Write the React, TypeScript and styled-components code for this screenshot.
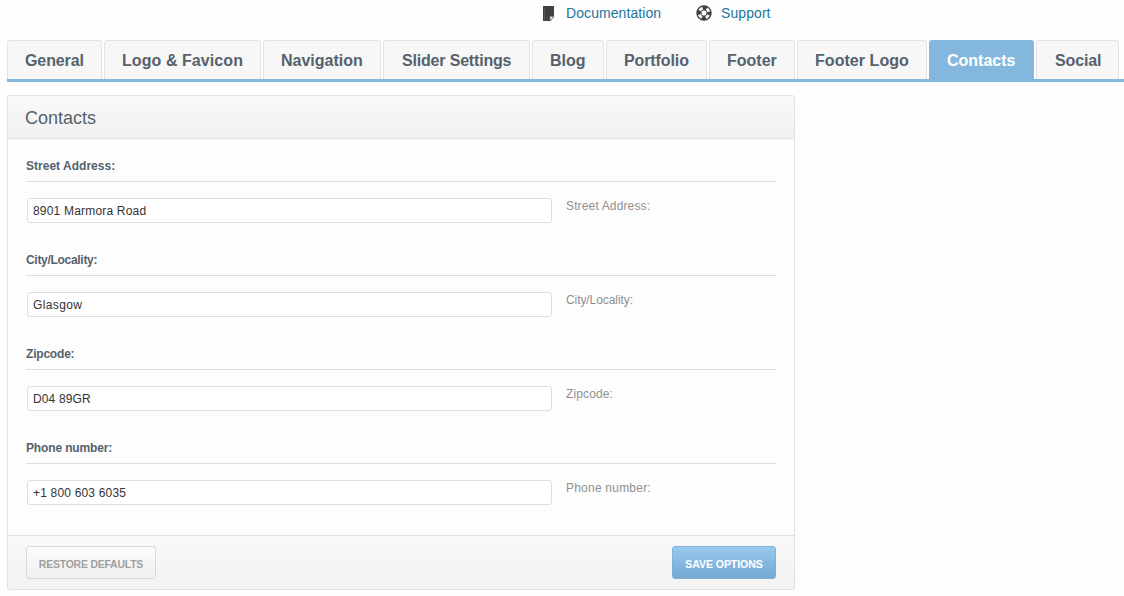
import React from 'react';
import styled, { createGlobalStyle } from 'styled-components';

const GlobalStyle = createGlobalStyle`
  * { box-sizing: border-box; }
  body {
    margin: 0;
    background: #fefefe;
    font-family: "Liberation Sans", Arial, sans-serif;
    overflow: hidden;
  }
`;

const Page = styled.div`
  width: 1124px;
  height: 596px;
  padding-left: 7px;
`;

const HelpLinks = styled.nav`
  display: flex;
  height: 40px;
  padding: 5px 0 0 535px;
  align-items: flex-start;
`;

const HelpLink = styled.a<{ $gap: number; $width: number }>`
  display: flex;
  width: ${(p) => p.$width}px;
  height: 16px;
  align-items: center;
  gap: ${(p) => p.$gap}px;
  color: #21759b;
  font-size: 14px;
  line-height: 16px;
  letter-spacing: 0.08px;
  text-decoration: none;

  svg { flex: none; display: block; }
`;

const TabBar = styled.ul`
  display: flex;
  gap: 2px;
  height: 42px;
  margin: 0;
  padding: 0;
  list-style: none;
  border-bottom: 3px solid #84b7dd;
`;

const Tab = styled.li<{ $width: number; $active?: boolean; $spacing?: number; $indent?: number }>`
  flex: none;
  width: ${(p) => p.$width}px;
  height: 39px;
  padding-left: ${(p) => p.$indent ?? 17}px;
  border: 1px solid ${(p) => (p.$active ? '#84b7dd' : '#e3e3e3')};
  border-bottom: 0;
  border-radius: 3px 3px 0 0;
  background: ${(p) => (p.$active ? '#84b7dd' : '#f7f7f7')};
  color: ${(p) => (p.$active ? '#fff' : '#55626d')};
  font-size: 16px;
  font-weight: bold;
  line-height: 39px;
  letter-spacing: ${(p) => p.$spacing ?? 0}px;
  white-space: nowrap;
`;

const Panel = styled.section`
  width: 788px;
  height: 495px;
  margin-top: 13px;
  border: 1px solid #e1e1e1;
  border-radius: 3px;
  background: #fdfdfd;
  overflow: hidden;
`;

const PanelHeader = styled.h2`
  height: 43px;
  margin: 0;
  padding-left: 17px;
  border-bottom: 1px solid #e1e1e1;
  background: linear-gradient(#f9f9f9, #f1f1f1);
  color: #55626d;
  font-size: 18px;
  font-weight: normal;
  line-height: 44px;
`;

const Fields = styled.div`
  height: 396px;
  padding: 0 18px;
`;

const Field = styled.div`
  height: 94px;
`;

const FieldLabel = styled.label<{ $spacing: number }>`
  display: block;
  height: 43px;
  padding-top: 20px;
  border-bottom: 1px solid #dedede;
  color: #55626d;
  font-size: 12px;
  font-weight: bold;
  line-height: 14px;
  letter-spacing: ${(p) => p.$spacing}px;
`;

const FieldRow = styled.div`
  display: flex;
  gap: 14px;
  padding: 16px 0 0 1px;
`;

const TextInput = styled.input<{ $spacing: number }>`
  width: 525px;
  height: 25px;
  padding: 1px 5px 0;
  border: 1px solid #dedede;
  border-radius: 3px;
  outline: 0;
  background: #fff;
  color: #333;
  font: 12px "Liberation Sans", Arial, sans-serif;
  letter-spacing: ${(p) => p.$spacing}px;
`;

const Hint = styled.span<{ $spacing: number }>`
  padding-top: 1px;
  color: #909090;
  font-size: 12px;
  line-height: 14px;
  letter-spacing: ${(p) => p.$spacing}px;
`;

const PanelFooter = styled.footer`
  display: flex;
  justify-content: space-between;
  height: 54px;
  padding: 10px 18px;
  border-top: 1px solid #e1e1e1;
  background: linear-gradient(#f9f9f9, #f2f2f2);
`;

const Button = styled.button<{ $primary?: boolean }>`
  width: ${(p) => (p.$primary ? 104 : 130)}px;
  height: 33px;
  padding: 2px 0 0;
  border: 1px solid ${(p) => (p.$primary ? '#7fb2d9' : '#d9d9d9')};
  border-radius: 3px;
  background: ${(p) =>
    p.$primary ? 'linear-gradient(#98c9ee, #74a9d2)' : 'linear-gradient(#fbfbfb, #f0f0f0)'};
  color: ${(p) => (p.$primary ? '#fff' : '#a0a0a0')};
  font: bold 10.5px "Liberation Sans", Arial, sans-serif;
  letter-spacing: ${(p) => (p.$primary ? -0.05 : -0.24)}px;
  white-space: nowrap;
`;

const DocumentIcon = () => (
  <svg width="13" height="16" viewBox="0 0 13 16">
    <path d="M1 1H12V12L8.5 16H1Z" fill="#404040" />
    <path d="M8 15.5V11.5H12Z" fill="#f4f4f4" stroke="#777" strokeWidth=".5" />
    <path d="M2.5 2V15" stroke="#666" strokeWidth=".6" />
  </svg>
);

const LifebuoyIcon = () => (
  <svg width="16" height="16" viewBox="0 0 16 16" fill="none">
    <circle cx="8" cy="8" r="5.2" stroke="#f4f4f4" strokeWidth="4" />
    <circle cx="8" cy="8" r="5.1" stroke="#414141" strokeWidth="4.2" strokeDasharray="4.2 3.81" strokeDashoffset="2.1" />
    <circle cx="8" cy="8" r="7.1" stroke="#414141" strokeWidth="1.2" />
    <circle cx="8" cy="8" r="3.1" stroke="#555" strokeWidth="1" />
  </svg>
);

const tabs = [
  { name: 'General', width: 95, spacing: -0.1 },
  { name: 'Logo & Favicon', width: 157, spacing: 0.07 },
  { name: 'Navigation', width: 118 },
  { name: 'Slider Settings', width: 147, spacing: -0.18, indent: 18 },
  { name: 'Blog', width: 72 },
  { name: 'Portfolio', width: 101, spacing: -0.1 },
  { name: 'Footer', width: 86 },
  { name: 'Footer Logo', width: 130, spacing: 0.05 },
  { name: 'Contacts', width: 105 },
  { name: 'Social', width: 83, spacing: -0.15, indent: 18 },
];

const fields = [
  { label: 'Street Address:', value: '8901 Marmora Road', spacing: [0.02, 0.19, 0.14] },
  { label: 'City/Locality:', value: 'Glasgow', spacing: [-0.3, 0.38, -0.08] },
  { label: 'Zipcode:', value: 'D04 89GR', spacing: [-0.2, 0.14, 0.12] },
  { label: 'Phone number:', value: '+1 800 603 6035', spacing: [-0.14, 0.18, 0.22] },
];

export default function App() {
  return (
    <>
      <GlobalStyle />
      <Page>
        <HelpLinks>
          <HelpLink $gap={11} $width={154}><DocumentIcon />Documentation</HelpLink>
          <HelpLink $gap={9} $width={90}><LifebuoyIcon />Support</HelpLink>
        </HelpLinks>
        <TabBar>
          {tabs.map((tab) => (
            <Tab
              key={tab.name}
              $width={tab.width}
              $spacing={tab.spacing}
              $indent={tab.indent}
              $active={tab.name === 'Contacts'}
            >
              {tab.name}
            </Tab>
          ))}
        </TabBar>
        <Panel>
          <PanelHeader>Contacts</PanelHeader>
          <Fields>
            {fields.map((field, i) => (
              <Field key={field.label}>
                <FieldLabel htmlFor={`field-${i}`} $spacing={field.spacing[0]}>{field.label}</FieldLabel>
                <FieldRow>
                  <TextInput id={`field-${i}`} defaultValue={field.value} $spacing={field.spacing[1]} />
                  <Hint $spacing={field.spacing[2]}>{field.label}</Hint>
                </FieldRow>
              </Field>
            ))}
          </Fields>
          <PanelFooter>
            <Button>RESTORE DEFAULTS</Button>
            <Button $primary>SAVE OPTIONS</Button>
          </PanelFooter>
        </Panel>
      </Page>
    </>
  );
}
